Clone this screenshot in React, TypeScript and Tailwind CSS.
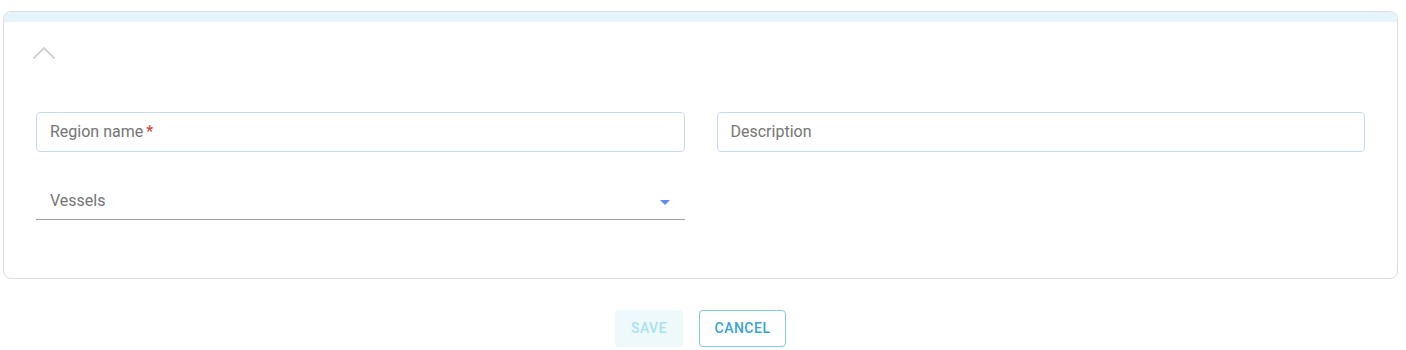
import { ChevronUp } from "lucide-react";

const font = { fontFamily: "Roboto, 'Liberation Sans', sans-serif" };

function TextField({ label, required }: { label: string; required?: boolean }) {
  return (
    <div className="flex h-[40px] items-center rounded-[4px] border border-[#c5d9f7] px-[13px] text-[16px] text-[#757575]">
      <span>{label}</span>
      {required && <span className="ml-[3px] text-[#e53935]">*</span>}
    </div>
  );
}

export default function App() {
  return (
    <div className="bg-white pt-[11px] pb-[3px]" style={font}>
      <div className="ml-[3px] w-[1395px] overflow-hidden rounded-[8px] border border-[#dedede]">
        <div className="h-[10px] bg-[#e6f5fb]" />
        <div className="px-[32px] pt-[11px] pb-[58px]">
          <ChevronUp className="-ml-[12px] size-[40px] text-[#cfcfcf]" strokeWidth={1.1} />
          <div className="mt-[39px] grid grid-cols-2 gap-x-[32px]">
            <TextField label="Region name" required />
            <TextField label="Description" />
            <div className="mt-[28px] flex h-[40px] items-center justify-between border-b border-[#9e9e9e] pl-[14px] pr-[15px] text-[16px] text-[#757575]">
              <span className="mt-[2px]">Vessels</span>
              <span className="mt-[6px] h-0 w-0 border-x-[5px] border-t-[5px] border-x-transparent border-t-[#5b8def]" />
            </div>
          </div>
        </div>
      </div>
      <div className="mt-[31px] flex justify-center gap-[16px] pr-[5px]">
        <button className="h-[37px] w-[68px] rounded-[4px] bg-[#eef9fb] text-[14px] font-medium tracking-[0.5px] text-[#a9e0f1]">
          SAVE
        </button>
        <button className="h-[37px] w-[87px] rounded-[4px] border border-[#7fcbe6] text-[14px] font-medium tracking-[0.5px] text-[#37a3d3]">
          CANCEL
        </button>
      </div>
    </div>
  );
}
